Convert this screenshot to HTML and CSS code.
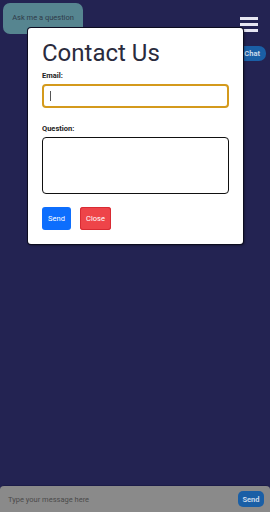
FILE: index.html
```html
<!DOCTYPE html>
<html lang="en">
<head>
  <meta charset="UTF-8" />
  <title>Chat</title>
  <link rel="stylesheet" href="styles.css">
</head>
<body>

<header class="top">
  <button class="ask-btn">Ask me a question</button>
  <div class="burger">
    <span></span>
    <span></span>
    <span></span>
  </div>
</header>

<div class="chat-tag-row">
  <span class="chat-tag">Your Chat</span>
</div>

<div class="modal">
  <h1>Contact Us</h1>
  <label class="field-label">Email:</label>
  <div class="email-input"><span class="caret"></span></div>
  <label class="field-label">Question:</label>
  <div class="question-input"></div>
  <div class="actions">
    <button class="btn send">Send</button>
    <button class="btn close">Close</button>
  </div>
</div>

<footer class="chat-bar">
  <span class="placeholder">Type your message here</span>
  <button class="bar-send">Send</button>
</footer>

</body>
</html>
```

FILE: styles.css
```css
html, body {
  margin: 0;
  padding: 0;
  height: 100%;
  background: #232352;
  font-family: Roboto, 'Liberation Sans', sans-serif;
  overflow: hidden;
}

.top {
  display: flex;
  justify-content: space-between;
  align-items: flex-start;
  padding: 3px 12px 0 3px;
}

.ask-btn {
  width: 80px;
  height: 31px;
  border: none;
  border-radius: 7px;
  background: #568590;
  color: #2f3a48;
  font-family: inherit;
  font-size: 7.5px;
  padding: 0 0 2px 0;
}

.burger {
  display: flex;
  flex-direction: column;
  gap: 3px;
  margin-top: 14px;
}

.burger span {
  display: block;
  width: 18px;
  height: 3px;
  background: #e6e6f2;
}

.chat-tag-row {
  display: flex;
  justify-content: flex-end;
  padding: 12px 4px 0 0;
}

.chat-tag {
  background: #1a5fa6;
  color: #c8d8ea;
  font-size: 7.5px;
  font-weight: bold;
  white-space: nowrap;
  padding: 3px 6px;
  border-radius: 7px;
}

.modal {
  position: absolute;
  left: 28px;
  top: 28px;
  width: 215px;
  height: 216px;
  box-sizing: border-box;
  background: #fff;
  border-radius: 3px;
  box-shadow: 0 0 0 1px #0c0c20, 1px 1px 3px rgba(0, 0, 0, 0.6);
  padding: 11px 14px 0 14px;
}

.modal h1 {
  margin: 0 0 4px 0;
  font-size: 24px;
  font-weight: 400;
  color: #2a2b3d;
  line-height: 28px;
}

.field-label {
  display: block;
  font-size: 7.5px;
  font-weight: bold;
  color: #222;
  margin-bottom: 4px;
}

.email-input {
  height: 24px;
  box-sizing: border-box;
  border: 2px solid #d49a1c;
  border-radius: 4px;
  padding: 5px 6px;
  margin-bottom: 16px;
}

.caret {
  display: block;
  width: 1px;
  height: 10px;
  background: #555;
}

.question-input {
  height: 57px;
  box-sizing: border-box;
  border: 1.5px solid #111;
  border-radius: 4px;
  margin-bottom: 13px;
}

.actions {
  display: flex;
  gap: 9px;
}

.btn {
  height: 23px;
  border: none;
  border-radius: 3px;
  color: #fff;
  font-family: inherit;
  font-size: 7.5px;
  padding: 0;
}

.btn.send {
  width: 29px;
  background: #0d6efd;
}

.btn.close {
  width: 31px;
  background: #ee4449;
  box-shadow: inset 0 0 0 1px #d82b33;
}

.chat-bar {
  position: fixed;
  left: 0;
  right: 0;
  bottom: 0;
  height: 27px;
  box-sizing: border-box;
  background: #8a8a8a;
  border-radius: 4px 4px 0 0;
  border-top: 1px solid #1c1c48;
  display: flex;
  align-items: center;
  justify-content: space-between;
  padding: 0 6px 0 8px;
}

.placeholder {
  font-size: 7.5px;
  color: #4a4a4a;
}

.bar-send {
  background: #1a5fa6;
  color: #c8d8ea;
  border: none;
  border-radius: 5px;
  font-family: inherit;
  font-size: 7.5px;
  font-weight: bold;
  height: 16px;
  width: 26px;
  padding: 0;
}
```
